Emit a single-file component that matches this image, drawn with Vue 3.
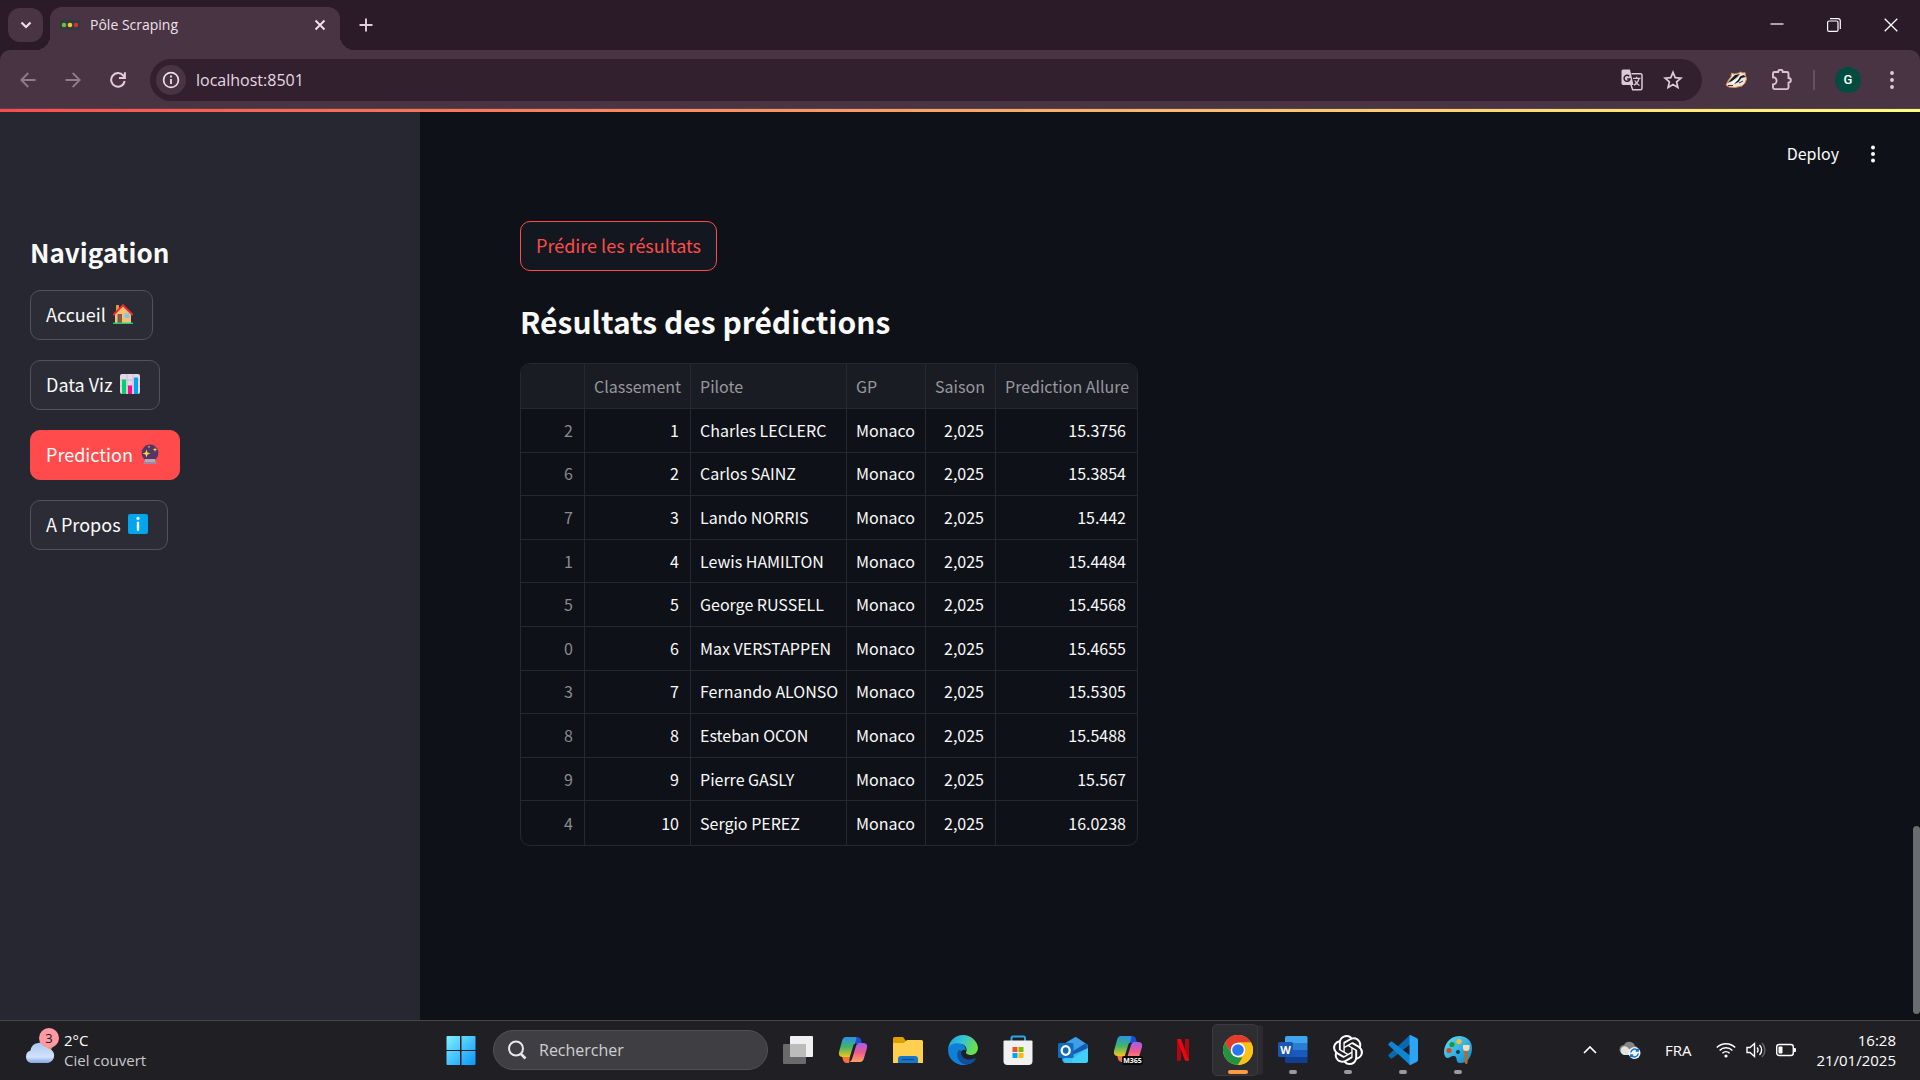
<script setup>
import { ref } from 'vue'

const url = ref('localhost:8501')
const search = ref('')

const nav = [
  { label: 'Accueil', icon: 'home' },
  { label: 'Data Viz', icon: 'chart' },
  { label: 'Prediction', icon: 'ball', active: true },
  { label: 'A Propos', icon: 'info' }
]

const columns = ['Classement', 'Pilote', 'GP', 'Saison', 'Prediction Allure']

const rows = [
  [2, 1, 'Charles LECLERC', '15.3756'],
  [6, 2, 'Carlos SAINZ', '15.3854'],
  [7, 3, 'Lando NORRIS', '15.442'],
  [1, 4, 'Lewis HAMILTON', '15.4484'],
  [5, 5, 'George RUSSELL', '15.4568'],
  [0, 6, 'Max VERSTAPPEN', '15.4655'],
  [3, 7, 'Fernando ALONSO', '15.5305'],
  [8, 8, 'Esteban OCON', '15.5488'],
  [9, 9, 'Pierre GASLY', '15.567'],
  [4, 10, 'Sergio PEREZ', '16.0238']
]
</script>

<template>
  <div class="screen">
    <header class="tabstrip">
      <button class="tab-search" aria-label="Rechercher dans les onglets">
        <svg width="12" height="8" viewBox="0 0 12 8"><path d="M1.500 1.500 6 6l4.500-4.500" fill="none" stroke="#ecdfe8" stroke-width="2.200" /></svg>
      </button>
      <div class="tab">
        <svg width="20" height="14" viewBox="0 0 20 14">
          <rect y="2" width="20" height="10" rx="2" fill="#2b3b40" />
          <circle cx="4" cy="7" r="2.300" fill="#7cb342" /><circle cx="10" cy="7" r="2.300" fill="#fbc02d" /><circle cx="16" cy="7" r="2.300" fill="#e5273d" />
        </svg>
        <span class="tab-title">Pôle Scraping</span>
        <button class="bare" aria-label="Fermer l'onglet">
          <svg width="12" height="12" viewBox="0 0 12 12"><path d="M1.500 1.500l9 9M10.500 1.500l-9 9" stroke="#f0e4ec" stroke-width="1.900" /></svg>
        </button>
      </div>
      <button class="bare new-tab" aria-label="Nouvel onglet">
        <svg width="14" height="14" viewBox="0 0 14 14"><path d="M7 .5v13M.5 7h13" stroke="#e3cddd" stroke-width="1.900" /></svg>
      </button>
      <div class="win-controls">
        <button class="bare" aria-label="Réduire"><svg width="14" height="14" viewBox="0 0 14 14"><path d="M.5 6h13" stroke="#fff" stroke-width="1.200" /></svg></button>
        <button class="bare" aria-label="Restaurer">
          <svg width="14" height="14" viewBox="0 0 14 14" fill="none" stroke="#fff" stroke-width="1.200"><rect x=".6" y="3" width="10.400" height="10.400" rx="1.500" /><path d="M3 .7h8a2.300 2.300 0 0 1 2.300 2.300v8" /></svg>
        </button>
        <button class="bare" aria-label="Fermer"><svg width="14" height="14" viewBox="0 0 14 14"><path d="M.7.7l12.600 12.600M13.300.7.7 13.300" stroke="#fff" stroke-width="1.300" /></svg></button>
      </div>
    </header>

    <div class="toolbar">
      <div class="tool-left">
        <button class="bare" aria-label="Précédent"><svg width="16" height="16" viewBox="0 0 16 16" fill="none" stroke="#8f7c8a" stroke-width="1.800"><path d="M15.500 8H1.500M8.300 1 1.300 8l7 7" /></svg></button>
        <button class="bare" aria-label="Suivant"><svg width="16" height="16" viewBox="0 0 16 16" fill="none" stroke="#8f7c8a" stroke-width="1.800"><path d="M.5 8h14M7.700 1l7 7-7 7" /></svg></button>
        <button class="bare" aria-label="Actualiser"><svg width="16" height="16" viewBox="0 0 16 16" fill="none" stroke="#e3cddd" stroke-width="2"><path d="M14.700 9A6.800 6.800 0 1 1 13.200 3.500L14.700 5M14.900.3v5.800H9" /></svg></button>
      </div>
      <div class="omnibox">
        <button class="site-info" aria-label="Informations sur le site">
          <svg width="18" height="18" viewBox="0 0 18 18"><circle cx="9" cy="9" r="7.400" fill="none" stroke="#eddfe9" stroke-width="1.700" /><path d="M9 8v5M9 4.600v2" stroke="#eddfe9" stroke-width="1.800" /></svg>
        </button>
        <input v-model="url" aria-label="Adresse" />
        <button class="bare" aria-label="Traduire">
          <svg width="22" height="22" viewBox="0 0 22 22">
            <path d="M2 .5h7l3.500 15.500H2A1.600 1.600 0 0 1 .5 14.500V2A1.500 1.500 0 0 1 2 .5Z" fill="#d9cad4" />
            <path d="M10.500 4.700h9a1.500 1.500 0 0 1 1.500 1.500v13a1.500 1.500 0 0 1-1.500 1.500h-7.800L10 16" fill="none" stroke="#d9cad4" stroke-width="1.500" />
            <path d="M8.200 7.200A3 3 0 1 0 9 10H6.200" fill="none" stroke="#33202f" stroke-width="1.500" />
            <path d="M12 9.300h7.500M15.700 7.800v1.500M18 9.500c-.8 3.500-3 5.500-5 6.600M13.800 11.500c1 2.200 2.500 3.700 4.700 5" fill="none" stroke="#d9cad4" stroke-width="1.300" />
          </svg>
        </button>
        <button class="bare" aria-label="Ajouter aux favoris">
          <svg width="20" height="20" viewBox="0 0 20 20"><path d="M10 2.300l2.200 5.300 5.700.5-4.300 3.800 1.300 5.600-4.900-3-4.900 3 1.300-5.600L2.100 8.100l5.700-.5z" fill="none" stroke="#dcccd7" stroke-width="1.700" /></svg>
        </button>
      </div>
      <div class="tool-right">
        <button class="bare" aria-label="Privacy Badger">
          <svg width="22" height="18" viewBox="0 0 22 18">
            <path d="M1 14 3.500 9 6 6l.5-4L9 3l5-1 1.500-1L18 2l2-.5.500 3L21.500 8 20 12l-3 3-7 1.500L4 16Z" fill="#ece7dd" stroke="#d98b4b" stroke-width="1" />
            <path d="M2.500 12 6 8l4-4 5-1-4 4-4 3Z" fill="#1c1a1c" /><path d="M8 11l5-5 6-2 1.500 2-4 1-3 4-4 2Z" fill="#1c1a1c" /><path d="m6 12 6-5 4-3-3 5-4 4Z" fill="#fff" /><path d="M3 14.500h5M14 12l4-2" stroke="#333" />
          </svg>
        </button>
        <button class="bare" aria-label="Extensions">
          <svg width="22" height="22" viewBox="0 0 22 22"><path d="M2 4.500Q2 3 3.500 3H7.200a2.300 2.300 0 0 1 4.600 0h4.200q1.500 0 1.500 1.500V9a2.300 2.300 0 0 1 0 4.600v5q0 1.500-1.500 1.500H3.500Q2 20.100 2 18.600V15.400a3.600 3.600 0 0 0 0-7.200Z" fill="none" stroke="#dcc3d7" stroke-width="1.900" /></svg>
        </button>
        <span class="divider"></span>
        <button class="avatar" aria-label="Profil">G</button>
        <button class="bare" aria-label="Menu"><svg width="4" height="18" viewBox="0 0 4 18" fill="#e3cddd"><circle cx="2" cy="2" r="1.900" /><circle cx="2" cy="9" r="1.900" /><circle cx="2" cy="16" r="1.900" /></svg></button>
      </div>
    </div>

    <div class="decoration"></div>

    <div class="app">
      <aside class="sidebar">
        <h2>Navigation</h2>
        <nav>
          <button v-for="n in nav" :key="n.label" class="nav-btn" :class="{ active: n.active }">
            <span>{{ n.label }}</span>
            <svg width="20" height="20" viewBox="0 0 20 20" aria-hidden="true">
              <template v-if="n.icon === 'home'">
                <path d="M3 1h3v6H3z" fill="#d79a4a" /><path d="M2 9l8-8 8 8v10H2z" fill="#f3c078" /><path d="M.8 10.500 10 1.300l9.200 9.200" fill="none" stroke="#ef2b2f" stroke-width="1.900" stroke-linecap="round" />
                <path d="M4.500 10H9v9H4.500z" fill="#8a5846" /><rect x="11.500" y="9.500" width="5" height="4.500" rx="1" fill="#7cc5f3" /><path d="M0 19.300h20" stroke="#17d46c" stroke-width="1.400" />
              </template>
              <template v-else-if="n.icon === 'chart'">
                <rect width="20" height="20" rx="2" fill="#e2d8e8" /><path d="M0 6h20M0 12h20M7 0v20M13 0v20" stroke="#c6b8d3" stroke-width=".8" />
                <path d="M2 5.500h4V20H2z" fill="#00d26a" /><path d="M8 11.500h4V20H8z" fill="#f70a8d" /><path d="M14 3.500h4V20h-4z" fill="#00a6ed" />
              </template>
              <template v-else-if="n.icon === 'ball'">
                <circle cx="10" cy="9" r="8.400" fill="#533566" /><path d="M5 15h10l1 5H4z" fill="#b6a7bc" /><path d="M4 18h12.200l.3 2H3.500z" fill="#9b8aa3" />
                <path d="m6.500 5.500 1 3 3 1-3 1-1 3-1-3-3-1 3-1zM15 3.500l.6 1.500 1.500.6-1.500.6-.6 1.500-.6-1.500-1.500-.6 1.500-.6zM9 1.500l.4 1 1 .4-1 .4-.4 1-.4-1-1-.4 1-.4z" fill="#fcd53f" />
              </template>
              <template v-else>
                <rect width="20" height="20" rx="2" fill="#00a6ed" /><circle cx="10" cy="4.300" r="1.600" fill="#fff" /><path d="M10 8.600v7.200" stroke="#fff" stroke-width="2.400" stroke-linecap="round" />
              </template>
            </svg>
          </button>
        </nav>
      </aside>

      <main class="main">
        <div class="app-header">
          <button class="deploy">Deploy</button>
          <button class="bare" aria-label="Menu principal"><svg width="6" height="18" viewBox="0 0 6 18" fill="#fafafa"><circle cx="3" cy="2.500" r="2" /><circle cx="3" cy="9" r="2" /><circle cx="3" cy="15.500" r="2" /></svg></button>
        </div>
        <section class="content">
          <button class="predict">Prédire les résultats</button>
          <h2>Résultats des prédictions</h2>
          <div class="frame">
            <table>
              <colgroup><col class="c-idx" /><col class="c-rank" /><col class="c-driver" /><col class="c-gp" /><col class="c-season" /><col class="c-pace" /></colgroup>
              <thead>
                <tr><th aria-label="Index"></th><th v-for="c in columns" :key="c" scope="col">{{ c }}</th></tr>
              </thead>
              <tbody>
                <tr v-for="r in rows" :key="r[0]">
                  <td class="num idx">{{ r[0] }}</td><td class="num">{{ r[1] }}</td><td>{{ r[2] }}</td><td>Monaco</td><td class="num">2,025</td><td class="num">{{ r[3] }}</td>
                </tr>
              </tbody>
            </table>
          </div>
        </section>
        <div class="scroll-thumb"></div>
      </main>
    </div>

    <footer class="taskbar">
      <button class="weather">
        <svg width="36" height="46" viewBox="0 0 36 46">
          <defs><linearGradient id="cloud" x1="0" y1="0" x2="0" y2="1"><stop offset="0" stop-color="#a9c9f5" /><stop offset=".7" stop-color="#d3e2fa" /><stop offset="1" stop-color="#7fa5e6" /></linearGradient></defs>
          <circle cx="23" cy="18" r="6" fill="#f28a1c" />
          <path d="M7 36a6.500 6.500 0 0 1-.5-12.500A9 9 0 0 1 23.500 21 7.600 7.600 0 0 1 24 36Z" fill="url(#cloud)" />
          <circle cx="25" cy="11" r="10" fill="#ff99a4" />
          <text x="25" y="16" text-anchor="middle" class="badge-text">3</text>
        </svg>
        <span class="weather-text"><span>2°C</span><span class="dim">Ciel couvert</span></span>
      </button>

      <div class="dock">
        <button class="cell" aria-label="Démarrer">
          <svg width="30" height="30" viewBox="0 0 30 30"><defs><linearGradient id="win" x1="0" y1="0" x2="1" y2="1"><stop offset="0" stop-color="#80f0ff" /><stop offset="1" stop-color="#0a96fb" /></linearGradient></defs><path d="M.5 2q0-1 1-1H14v14H.5zM15.500 1h13q1 0 1 1v13h-14zM.5 16H14v14H1.500q-1 0-1-1zM15.500 16h14v13q0 1-1 1h-13z" fill="url(#win)" /></svg>
        </button>
        <label class="search">
          <svg width="20" height="20" viewBox="0 0 20 20" fill="none" stroke="#e8e8ea" stroke-width="2"><circle cx="9" cy="8.500" r="7" /><path d="m13.500 13.500 5 5" stroke-width="2.600" /></svg>
          <input v-model="search" placeholder="Rechercher" aria-label="Rechercher" />
        </label>
        <button class="cell" aria-label="Vue des tâches">
          <svg width="30" height="30" viewBox="0 0 30 30"><rect y="9" width="23" height="20" rx="1" fill="#6a6a6c" /><rect x="7" y="1" width="23" height="21" rx="1" fill="#f0f0f0" /><rect x="7" y="9" width="16" height="13" fill="#bcbcbc" /></svg>
        </button>
        <button class="cell" aria-label="Copilot">
          <svg width="30" height="30" viewBox="0 0 30 30">
            <defs>
              <linearGradient id="cpa" x1="0" y1="0" x2="0" y2="1"><stop offset="0" stop-color="#2f8ee8" /><stop offset=".5" stop-color="#3fb56b" /><stop offset="1" stop-color="#f5c51b" /></linearGradient>
              <linearGradient id="cpb" x1="0" y1="0" x2="0" y2="1"><stop offset="0" stop-color="#a45cf0" /><stop offset=".5" stop-color="#ef5a8d" /><stop offset="1" stop-color="#ffa35c" /></linearGradient>
            </defs>
            <path d="M14 2h5q3 0 4 3l1 4h-6z" fill="#1c4fd6" />
            <path d="M11 28h-2q-3 0-4-3l-1-4h8z" fill="#f0743c" />
            <path d="M8 2h9q2 0 1 3l-4 14q-1 3-4 3H5q-5 0-4-5L4 6q1-4 4-4Z" fill="url(#cpa)" />
            <path d="M22 27h-11q2 0 3-3l4-13q1-3 4-3h3q5 0 4 5l-3 10q-1 4-4 4Z" fill="url(#cpb)" />
            <path d="m16.500 10-3.500 11" stroke="#202024" stroke-width="1.800" stroke-linecap="round" />
          </svg>
        </button>
        <button class="cell" aria-label="Explorateur de fichiers">
          <svg width="30" height="30" viewBox="0 0 30 30"><path d="M0 3.500Q0 2 1.500 2H10l3 4h6v7H0z" fill="#e0a000" /><path d="M0 8h11l3-3h14.500Q30 5 30 6.500V28H0z" fill="#ffd04f" /><path d="M5 28v-4q0-3 3-3h14q3 0 3 3v4z" fill="#1477c9" /><path d="M9 24.500h12" stroke="#0b4f91" stroke-width="1.300" /></svg>
        </button>
        <button class="cell" aria-label="Microsoft Edge">
          <svg width="30" height="30" viewBox="0 0 30 30">
            <defs><linearGradient id="edge" x1="0" y1="0" x2="1" y2=".4"><stop offset="0" stop-color="#1a9fe0" /><stop offset=".5" stop-color="#34c3d6" /><stop offset="1" stop-color="#6be04c" /></linearGradient></defs>
            <path d="M15 0a15 15 0 0 1 15 12.500c0 5-3.500 7.500-7.500 7.500-3.500 0-5-1.500-4.500-2.800C19.500 15 18.500 9 12 9 6 9 1 12 .2 14A15 15 0 0 1 15 0Z" fill="url(#edge)" />
            <path d="M.1 14C1 10 5.500 7.600 10.500 8.300c5 .7 8 4 7.300 8-3-1.500-7 .5-6.300 5 .8 5 6 7.700 10.500 7A15 15 0 0 1 .1 14Z" fill="#0f7fd8" />
            <path d="M10 16c-2.500 6 1.500 13.500 9 13.500 4 0 7.500-3 8.700-5.500.3-.7-.2-1-.8-.7-6 3-14 .5-13.500-5.800C13.500 16 12 13.500 10 16Z" fill="#0f4f9e" />
            <path d="M13.500 17.500c-.3-2.500 2.500-3.500 4.500-2.200.2 1-.6 1.700-.2 2.700.8 1.500 2.700 2.200 5.200 2l-2 3c-4 .5-7.200-2-7.500-5.500Z" fill="#202024" />
          </svg>
        </button>
        <button class="cell" aria-label="Microsoft Store">
          <svg width="30" height="30" viewBox="0 0 30 30"><path d="M8.500 8V3q0-1.500 1.500-1.500h10.500Q22 1.500 22 3v5" fill="none" stroke="#2aa7e3" stroke-width="2" /><path d="M.5 6.500Q.5 5.500 1.500 5.500h27q1 0 1 1V26q0 4-4 4h-21q-4 0-4-4z" fill="#f1f1f2" /><path d="M9.500 12h5v5h-5z" fill="#f25022" /><path d="M15.500 12h5v5h-5z" fill="#7fba00" /><path d="M9.500 18h5v5h-5z" fill="#00a4ef" /><path d="M15.500 18h5v5h-5z" fill="#ffb900" /></svg>
        </button>
        <button class="cell" aria-label="Outlook">
          <svg width="30" height="30" viewBox="0 0 30 30"><path d="M4 10 17 2l13 9v14q0 3-3 3H8q-4 0-4-4z" fill="#1a86dc" /><path d="M8 8 18 2l12 8-14 9z" fill="#3f9fe8" /><path d="m30 11-16 10v7h13q3 0 3-3z" fill="#36c5f4" /><path d="m28 8-16 10 2 6 16-11z" fill="#155bb0" /><path d="M5 24 30 13v12q0 3-3 3H8q-3 0-3-4z" fill="#45d0fa" opacity=".8" /><rect y="8" width="15.500" height="15" rx="1.500" fill="#0f6cbd" /><ellipse cx="7.700" cy="15.500" rx="4" ry="4.300" fill="none" stroke="#fff" stroke-width="2.300" /></svg>
        </button>
        <button class="cell" aria-label="Microsoft 365 Copilot">
          <svg width="30" height="30" viewBox="0 0 30 30"><path d="M14 1h5q3 0 4 3l1 4h-6z" fill="#1c4fd6" /><path d="M11 27H9q-3 0-4-3l-1-4h8z" fill="#f0743c" /><path d="M8 1h9q2 0 1 3l-4 14q-1 3-4 3H5q-5 0-4-5L4 5q1-4 4-4Z" fill="url(#cpa)" /><path d="M22 26H11q2 0 3-3l4-13q1-3 4-3h3q5 0 4 5l-3 10q-1 4-4 4Z" fill="url(#cpb)" /><path d="m16.500 9-3.500 11" stroke="#202024" stroke-width="1.800" stroke-linecap="round" /><rect x="9" y="21" width="21" height="9" rx="2" fill="#0a0a0a" /><text x="19.500" y="28" text-anchor="middle" class="m365-text">M365</text></svg>
        </button>
        <button class="cell" aria-label="Netflix">
          <svg width="30" height="30" viewBox="0 0 30 30"><path d="M9 4h4v21.500l-4 .5zM17 4h4v22l-4-.5z" fill="#b1060f" /><path d="M9 4h4l8 22-4-.5z" fill="#e50914" /></svg>
        </button>
        <button class="cell current" aria-label="Google Chrome">
          <svg width="30" height="30" viewBox="0 0 30 30"><circle cx="15" cy="15" r="15" fill="#fbc116" /><path d="M2 7.500A15 15 0 0 1 28 7.500H15L8.500 18.700Z" fill="#e33b2e" /><path d="M2 7.500 8.500 18.700 15 22.500h6.500L14.500 30A15 15 0 0 1 2 7.500Z" fill="#229342" /><path d="M28 7.500H15v8l6.500 3.200L15 30A15 15 0 0 0 28 7.500Z" fill="#fbc116" /><circle cx="15" cy="15" r="7.300" fill="#fff" /><circle cx="15" cy="15" r="5.800" fill="#2a75f0" /></svg>
        </button>
        <button class="cell open" aria-label="Word">
          <svg width="30" height="30" viewBox="0 0 30 30"><path d="M7 2.500Q7 1 8.500 1h19.500q1.500 0 1.500 1.500V8H7z" fill="#41a5ee" /><path d="M7 8h22.500v7H7z" fill="#2b7cd3" /><path d="M7 15h22.500v7H7z" fill="#185abd" /><path d="M7 22h22.500v4.500q0 1.500-1.500 1.500H8.500Q7 28 7 26.500z" fill="#103f91" /><rect y="7" width="15" height="15" rx="1.500" fill="#1a55b0" /><text x="7.500" y="18.500" text-anchor="middle" class="word-text">W</text></svg>
        </button>
        <button class="cell open" aria-label="ChatGPT">
          <svg width="30" height="30" viewBox="0 0 24 24" fill="#fff"><path d="M22.282 9.821a5.985 5.985 0 0 0-.516-4.910 6.046 6.046 0 0 0-6.510-2.900A6.065 6.065 0 0 0 4.981 4.182a5.985 5.985 0 0 0-3.998 2.900 6.046 6.046 0 0 0 .743 7.097 5.980 5.980 0 0 0 .511 4.911 6.051 6.051 0 0 0 6.515 2.900A5.985 5.985 0 0 0 13.260 24a6.056 6.056 0 0 0 5.772-4.206 5.990 5.990 0 0 0 3.998-2.900 6.056 6.056 0 0 0-.748-7.073zM13.260 22.430a4.476 4.476 0 0 1-2.876-1.041l.142-.080 4.778-2.758a.795.795 0 0 0 .393-.681v-6.737l2.020 1.169a.071.071 0 0 1 .038.052v5.583a4.504 4.504 0 0 1-4.495 4.493zM3.600 18.304a4.471 4.471 0 0 1-.535-3.014l.142.085 4.783 2.758a.771.771 0 0 0 .780 0l5.843-3.368v2.332a.080.080 0 0 1-.033.062L9.740 19.950a4.500 4.500 0 0 1-6.140-1.646zM2.340 7.896a4.485 4.485 0 0 1 2.366-1.973V11.600a.766.766 0 0 0 .388.677l5.815 3.354-2.020 1.169a.076.076 0 0 1-.071 0l-4.830-2.787A4.504 4.504 0 0 1 2.340 7.872zm16.597 3.856-5.833-3.388L15.119 7.200a.076.076 0 0 1 .071 0l4.830 2.792a4.494 4.494 0 0 1-.676 8.105v-5.678a.790.790 0 0 0-.407-.667zm2.010-3.024-.142-.085-4.774-2.782a.776.776 0 0 0-.785 0L9.409 9.230V6.897a.066.066 0 0 1 .028-.062l4.830-2.787a4.499 4.499 0 0 1 6.680 4.660zM8.307 12.863l-2.020-1.164a.080.080 0 0 1-.038-.057V6.075a4.499 4.499 0 0 1 7.376-3.454l-.142.081L8.704 5.460a.795.795 0 0 0-.393.681zm1.097-2.365 2.602-1.500 2.607 1.500v2.999l-2.597 1.500-2.607-1.500z" /></svg>
        </button>
        <button class="cell open" aria-label="Visual Studio Code">
          <svg width="30" height="30" viewBox="0 0 30 30"><path d="M22 0 .8 19.500q-1 1 0 2l1.700 1.700q.8.7 1.800 0L24 8z" fill="#0b68b0" /><path d="M22 30 .8 10.500q-1-1 0-2l1.700-1.700q.8-.7 1.800 0L24 22z" fill="#0d85d0" /><path d="M21.500.3q.8-.4 1.500 0l6 3q1 .5 1 1.700v20q0 1.200-1 1.700l-6 3q-.7.4-1.500 0z" fill="#2ba4f3" /></svg>
        </button>
        <button class="cell open" aria-label="Paint">
          <svg width="30" height="30" viewBox="0 0 30 30"><defs><linearGradient id="paint" x1="0" y1="0" x2="1" y2="1"><stop offset="0" stop-color="#5fe0fb" /><stop offset="1" stop-color="#0f84c9" /></linearGradient></defs><path d="M16 1c8 0 13 5 13 12 0 9-5 15-11 15-7 0-2-6-7-7-3-.6-6 4-8.500 1C-2 16 4 1 16 1Z" fill="url(#paint)" /><circle cx="6" cy="15.500" r="2.600" fill="#d8491f" /><circle cx="9" cy="9.500" r="2.600" fill="#1e9a2d" /><circle cx="16" cy="6.500" r="2.600" fill="#f6bd2f" /><circle cx="15" cy="17" r="2" fill="#17384e" /><path d="M21.500 15h3.500l-.5 13q-1.200 2.500-2.500 0z" fill="#b76b1e" /><path d="M20 10h6.500v3q0 3-3.200 3T20 13z" fill="#f3dcc0" /></svg>
        </button>
      </div>

      <div class="tray">
        <button class="bare" aria-label="Icônes cachées"><svg width="14" height="8" viewBox="0 0 14 8"><path d="m1 7 6-6 6 6" fill="none" stroke="#fff" stroke-width="1.700" /></svg></button>
        <button class="bare" aria-label="OneDrive"><svg width="22" height="18" viewBox="0 0 22 18"><path d="M5 13a4.500 4.500 0 0 1 0-9A6 6 0 0 1 16 5a4 4 0 0 1 3 6l-4 3Z" fill="#858585" /><path d="M5 14A4.500 4.500 0 0 1 4.500 5.500Q8 4.500 10 8l6 3-2 3Z" fill="#e3e3e3" /><circle cx="15.500" cy="12" r="6" fill="#f4f8fc" /><path d="M11.700 11.500a4 4 0 0 1 7-2M19.300 12.500a4 4 0 0 1-7 2M19.200 7.500v2.500h-2.500M11.800 16.500V14h2.500" fill="none" stroke="#1273cf" stroke-width="1.500" /></svg></button>
        <span class="lang">FRA</span>
        <button class="bare net" aria-label="Réseau, son et batterie">
          <svg width="20" height="18" viewBox="0 0 20 18" fill="none" stroke="#fff" stroke-width="1.500"><path d="M.8 6.500a13 13 0 0 1 18.400 0M3.600 9.500a9 9 0 0 1 12.800 0M6.400 12.300a5.200 5.200 0 0 1 7.200 0" /><circle cx="10" cy="15" r="1.600" fill="#fff" stroke="none" /></svg>
          <svg width="20" height="18" viewBox="0 0 20 18" fill="none" stroke="#fff" stroke-width="1.400"><path d="M1 6.500h3L8.500 2.500v13L4 11.500H1z" /><path d="M11 6.500a3.500 3.500 0 0 1 0 5M13.500 4a7 7 0 0 1 0 10" /><path d="M16 2a10 10 0 0 1 0 14" stroke="#68686a" /></svg>
          <svg width="20" height="18" viewBox="0 0 20 18"><rect x=".7" y="3.500" width="16.600" height="11" rx="2.500" fill="none" stroke="#fff" stroke-width="1.400" /><rect x="2.500" y="5.500" width="4" height="7" rx="1" fill="#fff" /><path d="M18 7h1q1 0 1 1v2q0 1-1 1h-1z" fill="#fff" /></svg>
        </button>
        <time class="clock"><span>16:28</span><span>21/01/2025</span></time>
      </div>
    </footer>
  </div>
</template>

<style>
body {
  margin: 0;
  background: #0e1117;
}
</style>

<style scoped>
* {
  box-sizing: border-box;
}
.screen {
  min-height: 100vh;
  display: flex;
  flex-direction: column;
  background: #2b1b29;
  font-family: "Open Sans", "Noto Sans", sans-serif;
  color: #fff;
}
button {
  font: inherit;
  color: inherit;
  cursor: pointer;
}
svg {
  display: block;
  flex: none;
}
.bare {
  display: grid;
  place-items: center;
  border: 0;
  padding: 0;
  background: none;
}

/* Browser chrome */
.tabstrip {
  height: 50px;
  display: flex;
  align-items: center;
  padding-left: 8px;
}
.tab-search {
  position: relative;
  z-index: 1;
  width: 35px;
  height: 34px;
  display: grid;
  place-items: center;
  border: 0;
  border-radius: 12px;
  background: #493443;
}
.tab {
  position: relative;
  align-self: flex-end;
  width: 290px;
  height: 43px;
  margin-left: 7px;
  padding: 0 14px 7px 10px;
  display: flex;
  align-items: center;
  gap: 10px;
  border-radius: 12px 12px 0 0;
  background: #493443;
}
.tab::before,
.tab::after {
  content: "";
  position: absolute;
  bottom: 0;
  width: 14px;
  height: 14px;
}
.tab::before {
  right: 100%;
  background: radial-gradient(circle at 0 0, #2b1b29 14px, #493443 14px);
}
.tab::after {
  left: 100%;
  background: radial-gradient(circle at 100% 0, #2b1b29 14px, #493443 14px);
}
.tab-title {
  flex: 1;
  font-size: 14px;
  line-height: 20px;
  color: #eee1ea;
}
.new-tab {
  margin-left: 19px;
}
.win-controls {
  margin-left: auto;
  padding-right: 1px;
  display: flex;
}
.win-controls .bare {
  width: 57px;
  height: 50px;
}
.toolbar {
  height: 59px;
  display: flex;
  align-items: center;
  border-radius: 10px 10px 0 0;
  background: #493443;
  box-shadow: inset 0 -1px #524450;
  padding-right: 26px;
}
.tool-left {
  width: 150px;
  display: flex;
  gap: 29px;
  padding-left: 20px;
}
.omnibox {
  flex: 1;
  height: 42px;
  display: flex;
  align-items: center;
  gap: 20px;
  padding: 0 19px 0 6px;
  border-radius: 21px;
  background: #33202f;
}
.site-info {
  width: 30px;
  height: 30px;
  display: grid;
  place-items: center;
  padding: 0;
  border: 0;
  border-radius: 50%;
  background: #493443;
}
.omnibox input {
  flex: 1;
  min-width: 0;
  margin-left: -10px;
  padding: 0;
  border: 0;
  outline: 0;
  background: none;
  color: #e6d9e2;
  font: 16px/24px "Open Sans", sans-serif;
}
.tool-right {
  display: flex;
  align-items: center;
  padding-left: 23px;
}
.tool-right .bare + .bare {
  margin-left: 24px;
}
.divider {
  width: 2px;
  height: 20px;
  margin: 0 20px;
  background: #655060;
}
.avatar {
  width: 26px;
  height: 26px;
  margin-right: 29px;
  padding: 0;
  border: 0;
  border-radius: 50%;
  background: #004d40;
  font: 500 13px/26px Roboto, sans-serif;
}
.decoration {
  height: 3px;
  background: linear-gradient(90deg, #ff4b4b, #fffd80);
}

/* Application */
.app {
  flex: 1;
  display: flex;
  font-family: "Noto Sans CJK SC", sans-serif;
  color: #fafafa;
}
.sidebar {
  width: 420px;
  padding: 119px 30px 30px;
  background: #262730;
}
.sidebar h2 {
  margin: 0 0 18px;
  font-size: 26px;
  line-height: 41px;
  font-weight: 700;
}
.sidebar nav {
  display: flex;
  flex-direction: column;
  align-items: flex-start;
  gap: 20px;
}
.nav-btn,
.predict {
  height: 50px;
  padding: 0 15px 2px;
  border: 1px solid #51525b;
  border-radius: 10px;
  background: #2b2c36;
  font-size: 18px;
  line-height: 30px;
  white-space: nowrap;
}
.nav-btn {
  display: flex;
  align-items: center;
  gap: 7px;
  padding-right: 19px;
}
.nav-btn.active {
  border-color: #ff4b4b;
  background: #ff4b4b;
}
.main {
  position: relative;
  flex: 1;
  min-width: 0;
  background: #0e1117;
}
.app-header {
  display: flex;
  justify-content: flex-end;
  align-items: center;
  gap: 31px;
  height: 84px;
  padding-right: 44px;
}
.deploy {
  padding: 0 0 2px;
  border: 0;
  background: none;
  font-size: 16px;
  line-height: 24px;
}
.content {
  padding: 25px 100px 80px;
}
.predict {
  display: block;
  border-color: #ff4b4b;
  background: #131720;
  color: #ff4b4b;
}
.content h2 {
  margin: 28px 0 20px;
  font-size: 30px;
  line-height: 44px;
  font-weight: 700;
}
.frame {
  width: max-content;
  border: 1px solid #26282d;
  border-radius: 10px;
  overflow: hidden;
}
table {
  table-layout: fixed;
  width: 616px;
  height: 481px;
  border-collapse: separate;
  border-spacing: 0;
  font-size: 16px;
  line-height: 24px;
}
.c-idx {
  width: 64px;
}
.c-rank {
  width: 106px;
}
.c-driver {
  width: 156px;
}
.c-gp {
  width: 79px;
}
.c-season {
  width: 70px;
}
.c-pace {
  width: 141px;
}
th,
td {
  height: 43px;
  padding: 0 0 1px 9px;
  border: 0 solid #26282d;
  border-width: 0 1px 1px 0;
  text-align: left;
  white-space: nowrap;
}
th {
  height: 45px;
  background: #1a1c24;
  color: #97989b;
  font-weight: 400;
}
th:last-child,
td:last-child {
  border-right: 0;
}
tbody tr:last-child td {
  border-bottom: 0;
}
.num {
  padding-right: 11px;
  text-align: right;
}
.idx {
  color: #8a8b8f;
}
.scroll-thumb {
  position: absolute;
  right: 0;
  bottom: 6px;
  width: 7px;
  height: 188px;
  border-radius: 4px;
  background: #6b6c70;
}

/* Taskbar */
.taskbar {
  height: 60px;
  display: grid;
  grid-template-columns: 1fr auto 1fr;
  align-items: center;
  padding-bottom: 2px;
  border-top: 1px solid #464649;
  background: #202024;
}
.weather {
  justify-self: start;
  display: flex;
  align-items: center;
  gap: 4px;
  padding: 0 0 0 24px;
  border: 0;
  background: none;
  text-align: left;
}
.weather-text,
.clock {
  display: flex;
  flex-direction: column;
  font-size: 15px;
  line-height: 20px;
}
.dim {
  color: #c8c8ca;
}
.badge-text {
  font-size: 13px;
  fill: #1b1b1b;
}
.m365-text {
  font: 700 7px "Open Sans", sans-serif;
  fill: #fff;
}
.word-text {
  font: 700 11px "Open Sans", sans-serif;
  fill: #fff;
}
.dock {
  display: flex;
  align-items: center;
  padding-right: 2px;
}
.cell {
  position: relative;
  width: 55px;
  height: 50px;
  display: grid;
  place-items: center;
  padding: 0;
  border: 0;
  background: none;
}
.cell.open::after,
.cell.current::after {
  content: "";
  position: absolute;
  bottom: 1px;
  width: 8px;
  height: 4px;
  border-radius: 2px;
  background: #9a9a9c;
}
.cell.current::before {
  content: "";
  position: absolute;
  left: 2px;
  width: 44px;
  height: 50px;
  border: 1px solid #3a3a3e;
  border-radius: 5px;
  background: #2e2e32;
  box-shadow: 6px 0 0 -1px #2b2b2f;
}
.cell.current svg {
  position: relative;
}
.cell.current::after {
  width: 20px;
  background: #fe9a44;
}
.search {
  width: 275px;
  height: 40px;
  margin: 0 2px 0 5px;
  padding: 0 13px;
  display: flex;
  align-items: center;
  gap: 12px;
  border: 1px solid #515155;
  border-radius: 20px;
  background: #3f3f43;
}
.search input {
  flex: 1;
  min-width: 0;
  padding: 0;
  border: 0;
  outline: 0;
  background: none;
  color: #fff;
  font: 16px/24px "Open Sans", sans-serif;
}
.search input::placeholder {
  color: #cfcfd1;
  opacity: 1;
}
.tray {
  justify-self: end;
  display: flex;
  align-items: center;
  padding-right: 24px;
}
.tray .bare + .bare {
  margin-left: 22px;
}
.lang {
  margin: 0 25px 0 24px;
  font-size: 15px;
  line-height: 20px;
}
.net {
  grid-auto-flow: column;
  gap: 10px;
}
.clock {
  margin-left: 20px;
  text-align: right;
}
</style>
